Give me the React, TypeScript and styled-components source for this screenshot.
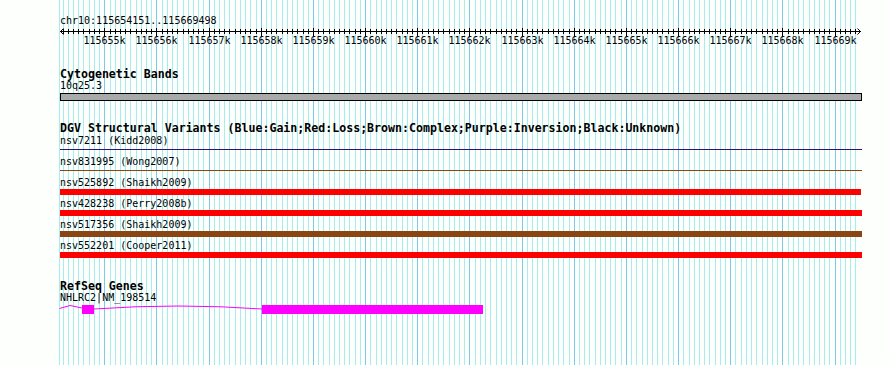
import styled, { createGlobalStyle } from 'styled-components';

const START = 115654151;
const END = 115669498;
const SCALE = 0.052164;
const LEFT = 60;
const WIDTH = 802;

const toX = (bp: number) => LEFT + (bp - START) * SCALE;

const GlobalStyle = createGlobalStyle`
  html, body {
    margin: 0;
    padding: 0;
    background: #fdfffd;
  }
`;

const Panel = styled.div`
  position: relative;
  width: 890px;
  height: 365px;
  overflow: hidden;
  background: #fdfffd;
  font-family: 'DejaVu Sans Mono', 'Liberation Mono', monospace;
  color: #000;
`;

const GridLayer = styled.svg`
  position: absolute;
  inset: 0;
  z-index: 0;
`;

const Tracks = styled.div`
  position: relative;
  z-index: 1;
  display: flex;
  flex-direction: column;
  padding: 15px 28px 0 60px;
`;

const Track = styled.section<{ $top: number }>`
  display: flex;
  flex-direction: column;
  margin-top: ${(p) => p.$top}px;
`;

const TrackTitle = styled.div`
  font-weight: 700;
  font-size: 11.6px;
  line-height: 12px;
  height: 12px;
  white-space: nowrap;
`;

const Label = styled.div<{ $h?: number }>`
  font-size: 10px;
  line-height: 12px;
  height: ${(p) => p.$h ?? 12}px;
  white-space: nowrap;
`;

const RulerSvg = styled.svg`
  display: block;
  width: ${WIDTH}px;
  height: 21px;
  overflow: visible;
`;

const BandBar = styled.div`
  box-sizing: border-box;
  width: ${WIDTH}px;
  height: 8px;
  border: 1px solid #000;
  background: #aaaaaa;
`;

const VariantRow = styled.div`
  display: flex;
  flex-direction: column;
  padding-bottom: 3px;
`;

const Glyph = styled.div`
  position: relative;
  height: 6px;
`;

const Stroke = styled.div<{ $kind: 'line' | 'bar'; $color: string; $end: number }>`
  margin-top: ${(p) => (p.$kind === 'line' ? 2 : 0)}px;
  width: ${(p) => p.$end - LEFT}px;
  height: ${(p) => (p.$kind === 'line' ? 1 : 6)}px;
  background: ${(p) => p.$color};
`;

const GeneSvg = styled.svg`
  display: block;
  width: ${WIDTH}px;
  height: 10px;
  overflow: visible;
`;

type Variant = {
  id: string;
  source: string;
  kind: 'line' | 'bar';
  color: string;
  end: number;
};

const variants: Variant[] = [
  { id: 'nsv7211', source: 'Kidd2008', kind: 'line', color: '#36106e', end: 862 },
  { id: 'nsv831995', source: 'Wong2007', kind: 'line', color: '#8b4513', end: 862 },
  { id: 'nsv525892', source: 'Shaikh2009', kind: 'bar', color: '#ff0000', end: 861 },
  { id: 'nsv428238', source: 'Perry2008b', kind: 'bar', color: '#ff0000', end: 862 },
  { id: 'nsv517356', source: 'Shaikh2009', kind: 'bar', color: '#8b4513', end: 862 },
  { id: 'nsv552201', source: 'Cooper2011', kind: 'bar', color: '#ff0000', end: 862 },
];

const gridLines: { col: number; major: boolean }[] = [{ col: 59, major: false }];
for (let bp = 115654200; bp <= 115669400; bp += 100) {
  gridLines.push({ col: Math.round(toX(bp)), major: bp % 1000 === 0 });
}

const Grid = () => (
  <GridLayer width={890} height={365} shapeRendering="crispEdges">
    {gridLines.map((g) => (
      <line
        key={g.col}
        x1={g.col + 0.5}
        x2={g.col + 0.5}
        y1={0}
        y2={365}
        stroke={g.major ? '#80c8ea' : '#aaecee'}
        strokeWidth={1}
      />
    ))}
  </GridLayer>
);

const Ruler = () => {
  const ticks = gridLines.slice(1);
  const y = 4.5;
  const right = Math.round(toX(END)) - LEFT;
  return (
    <RulerSvg>
      <g shapeRendering="crispEdges" stroke="#000" strokeWidth={1}>
        <line x1={0} x2={right} y1={y} y2={y} />
        {ticks.map((t) => (
          <line
            key={t.col}
            x1={t.col - LEFT + 0.5}
            x2={t.col - LEFT + 0.5}
            y1={t.major ? 1 : 2}
            y2={t.major ? 9 : 7}
          />
        ))}
      </g>
      <g stroke="#000" strokeWidth={1} fill="none">
        <polyline points={`3.5,1.5 0.5,4.5 3.5,7.5`} />
        <polyline points={`${right - 3.5},1.5 ${right - 0.5},4.5 ${right - 3.5},7.5`} />
      </g>
      {ticks
        .filter((t) => t.major)
        .map((t, i) => (
          <text
            key={t.col}
            x={t.col - LEFT + 0.5}
            y={16.5}
            textAnchor="middle"
            fontSize={10}
            fontFamily="'DejaVu Sans Mono', 'Liberation Mono', monospace"
            fill="#000"
          >
            {115655 + i}k
          </text>
        ))}
    </RulerSvg>
  );
};

const Gene = () => (
  <GeneSvg>
    <g fill="none" stroke="#ff00ff" strokeWidth={1}>
      <polyline points="-0.5,3.5 10,0.5 22,3" />
      <path d="M34 4 Q118 -2 202 4" />
    </g>
    <g fill="#ff00ff" shapeRendering="crispEdges">
      <rect x={22} y={0} width={12} height={9} />
      <rect x={202} y={0} width={221} height={9} />
    </g>
  </GeneSvg>
);

export default function App() {
  return (
    <>
      <GlobalStyle />
      <Panel>
        <Grid />
        <Tracks>
          <Track $top={0}>
            <Label>chr10:115654151..115669498</Label>
            <Ruler />
          </Track>

          <Track $top={20}>
            <TrackTitle>Cytogenetic Bands</TrackTitle>
            <Label $h={13}>10q25.3</Label>
            <BandBar />
          </Track>

          <Track $top={21}>
            <TrackTitle>
              DGV Structural Variants (Blue:Gain;Red:Loss;Brown:Complex;Purple:Inversion;Black:Unknown)
            </TrackTitle>
            <div style={{ height: 1 }} />
            {variants.map((v) => (
              <VariantRow key={v.id}>
                <Label>
                  {v.id} ({v.source})
                </Label>
                <Glyph>
                  <Stroke $kind={v.kind} $color={v.color} $end={v.end} />
                </Glyph>
              </VariantRow>
            ))}
          </Track>

          <Track $top={19}>
            <TrackTitle>RefSeq Genes</TrackTitle>
            <Label $h={13}>NHLRC2|NM_198514</Label>
            <Gene />
          </Track>
        </Tracks>
      </Panel>
    </>
  );
}
